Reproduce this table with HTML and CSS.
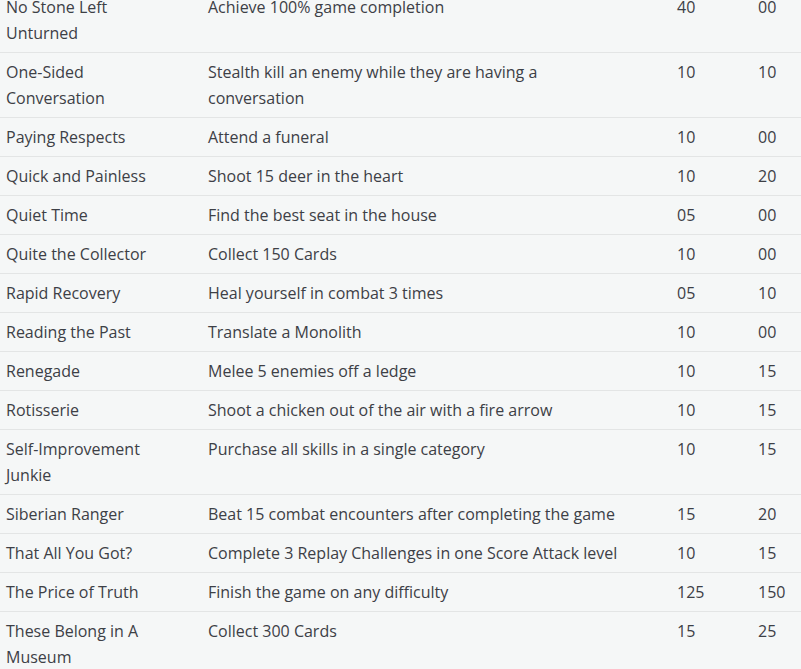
FILE: index.html
```html
<!DOCTYPE html>
<html lang="en">
<head>
<meta charset="utf-8">
<title>Achievements</title>
<link rel="stylesheet" href="styles.css">
</head>
<body>
<table class="ach">
  <colgroup>
    <col class="c-name"><col class="c-desc"><col class="c-pts"><col class="c-gs">
  </colgroup>
  <tbody>
    <tr><td>No Stone Left Unturned</td><td>Achieve 100% game completion</td><td>40</td><td>00</td></tr>
    <tr><td>One-Sided Conversation</td><td>Stealth kill an enemy while they are having a conversation</td><td>10</td><td>10</td></tr>
    <tr><td>Paying Respects</td><td>Attend a funeral</td><td>10</td><td>00</td></tr>
    <tr><td>Quick and Painless</td><td>Shoot 15 deer in the heart</td><td>10</td><td>20</td></tr>
    <tr><td>Quiet Time</td><td>Find the best seat in the house</td><td>05</td><td>00</td></tr>
    <tr><td>Quite the Collector</td><td>Collect 150 Cards</td><td>10</td><td>00</td></tr>
    <tr><td>Rapid Recovery</td><td>Heal yourself in combat 3 times</td><td>05</td><td>10</td></tr>
    <tr><td>Reading the Past</td><td>Translate a Monolith</td><td>10</td><td>00</td></tr>
    <tr><td>Renegade</td><td>Melee 5 enemies off a ledge</td><td>10</td><td>15</td></tr>
    <tr><td>Rotisserie</td><td>Shoot a chicken out of the air with a fire arrow</td><td>10</td><td>15</td></tr>
    <tr><td>Self-Improvement Junkie</td><td>Purchase all skills in a single category</td><td>10</td><td>15</td></tr>
    <tr><td>Siberian Ranger</td><td>Beat 15 combat encounters after completing the game</td><td>15</td><td>20</td></tr>
    <tr><td>That All You Got?</td><td>Complete 3 Replay Challenges in one Score Attack level</td><td>10</td><td>15</td></tr>
    <tr><td>The Price of Truth</td><td>Finish the game on any difficulty</td><td>125</td><td>150</td></tr>
    <tr><td>These Belong in A Museum</td><td>Collect 300 Cards</td><td>15</td><td>25</td></tr>
  </tbody>
</table>
</body>
</html>
```
FILE: styles.css
```css
html, body {
  margin: 0;
  padding: 0;
  background: #f5f7f7;
  overflow: hidden;
}
body {
  font-family: "Open Sans", "Liberation Sans", sans-serif;
  font-size: 16px;
  line-height: 26px;
  color: #3d4046;
}
.ach {
  border-collapse: collapse;
  table-layout: fixed;
  width: 801px;
  margin-top: -12px;
}
.c-name { width: 202px; }
.c-desc { width: 469px; }
.c-pts { width: 81px; }
.c-gs { width: 49px; }
.ach td {
  padding: 6px 6px;
  vertical-align: top;
  border-bottom: 1px solid #e3e5e5;
  text-align: left;
}
.ach td:nth-child(1) { padding-right: 40px; }
.ach td:nth-child(2) { padding-right: 46px; }
.ach td:nth-child(4) { padding-right: 0; white-space: nowrap; }
```
